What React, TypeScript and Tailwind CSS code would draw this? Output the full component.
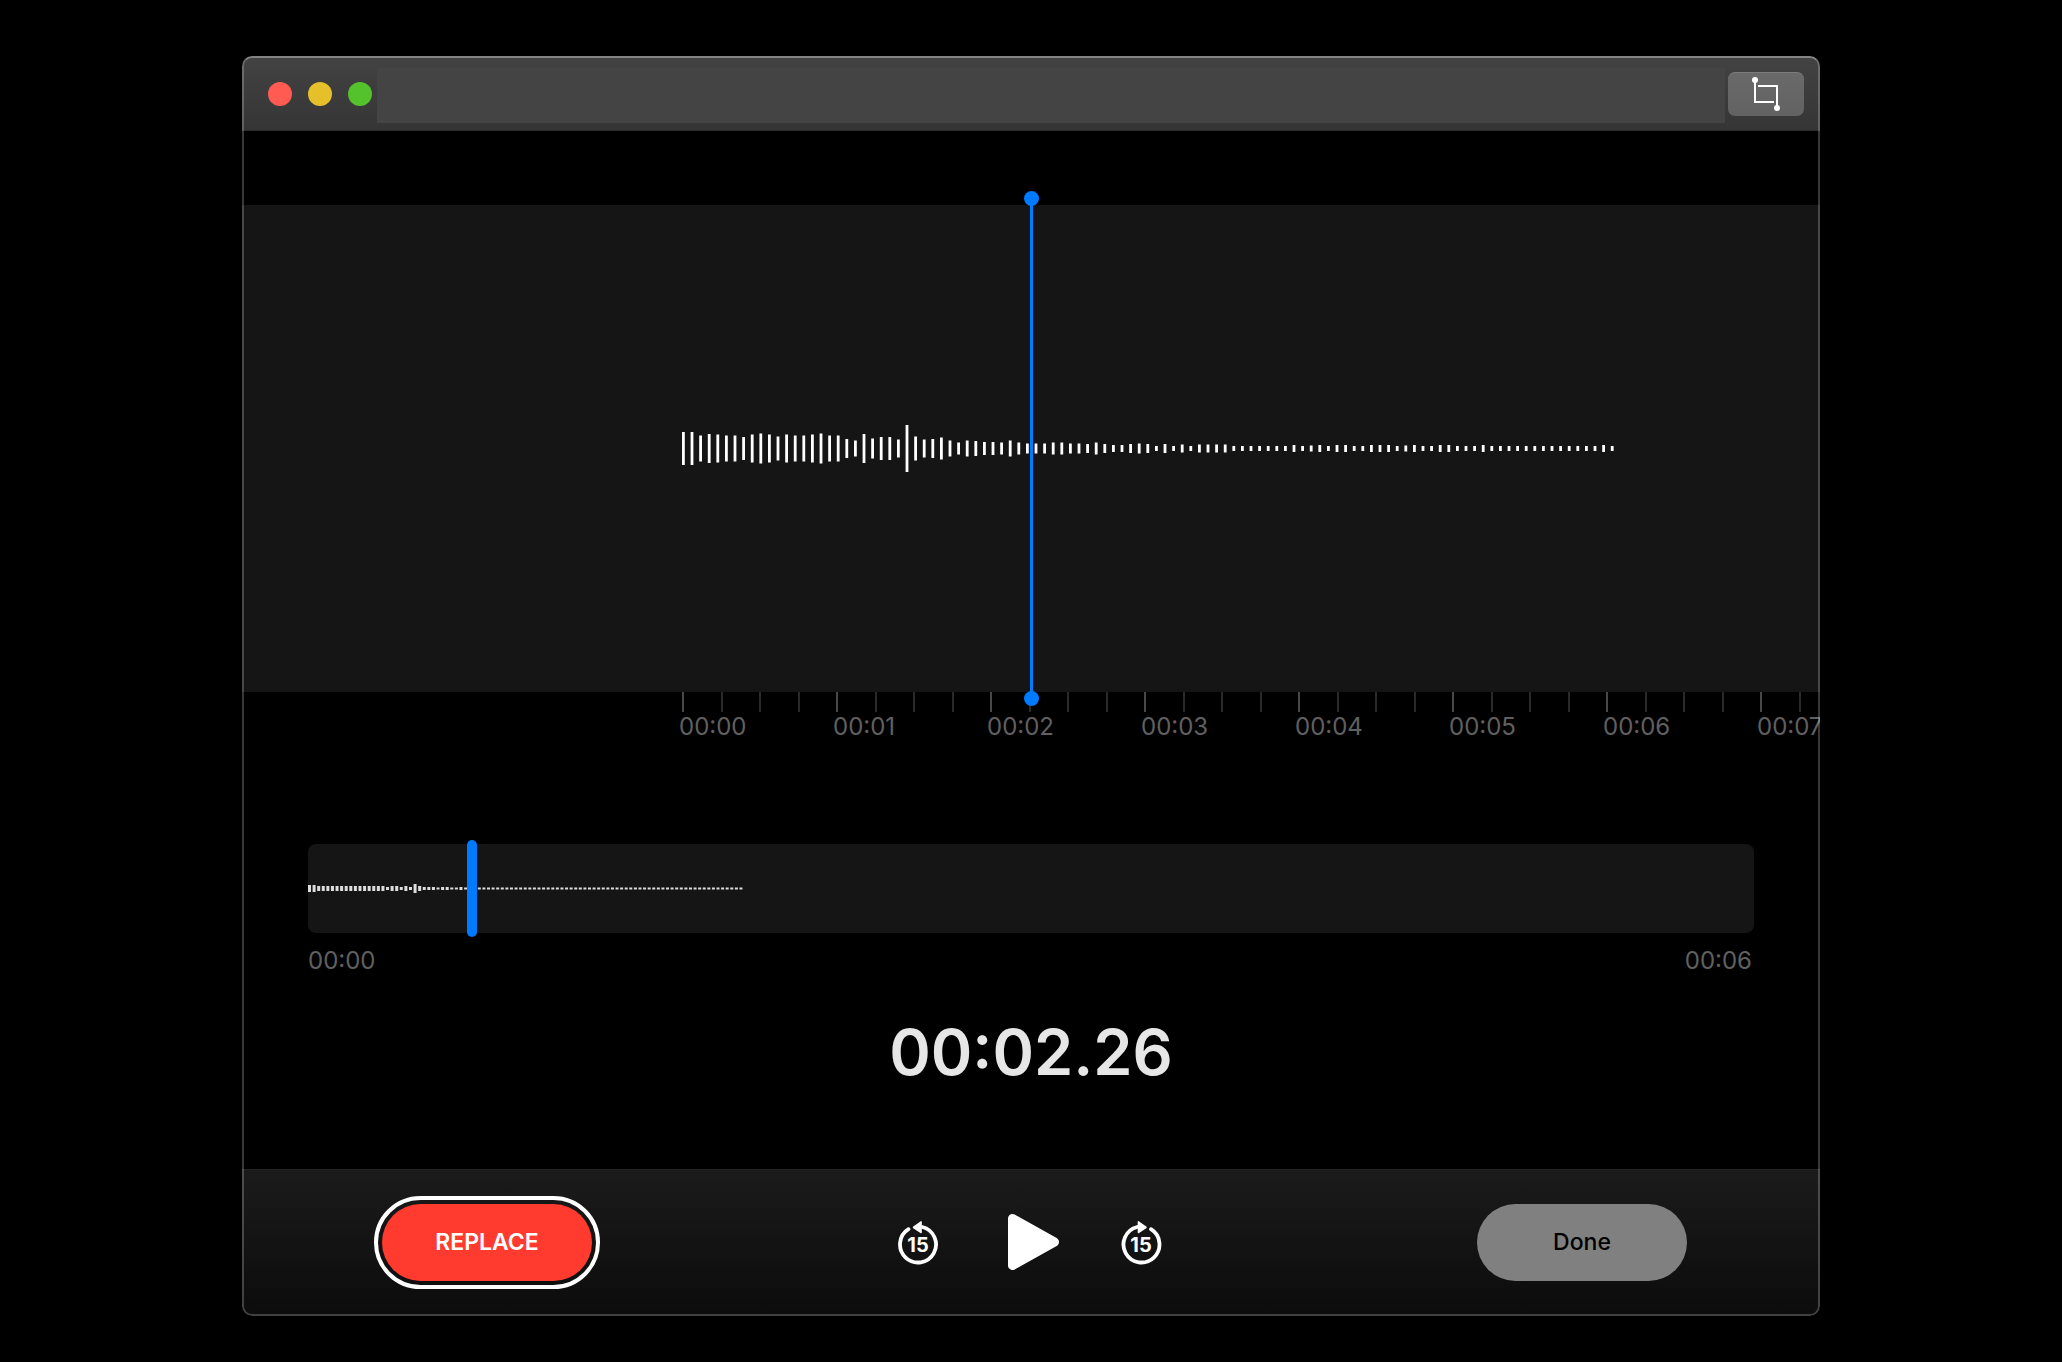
import React, { useState } from "react";

// Ruler scale: 154px per second, time is kept in hundredths of a second
const PX_PER_TICK = 1.54;
const OVERVIEW_MAX = 2041;

const LEVELS = [
    33, 33, 26, 29, 28, 26, 26, 23, 28, 30, 28, 24, 28, 26, 26, 28, 30, 26, 26, 19, 16, 29, 20, 23, 23, 18, 47,
    24, 18, 19, 22, 16, 12, 16, 15, 13, 13, 12, 16, 12, 10, 10, 10, 12, 12, 10, 10, 9, 12, 9, 7, 7, 9,
    10, 9, 5, 9, 5, 8, 5, 8, 8, 8, 8,
    5, 5, 5, 5, 5, 5, 5, 7, 5, 6, 7, 5, 7, 7, 5, 5, 7, 7, 7, 5, 6, 7, 5, 5, 7, 7, 5, 5, 5, 7,
    5, 5, 5, 5, 5, 5, 5, 5, 5, 5, 5, 5, 5, 7, 5,
];

const OVERVIEW_LEVELS = [
    7, 7, 5, 5, 5, 5, 5, 5, 5, 5, 5, 5, 5, 5, 5, 5, 5, 3, 5, 5, 3, 5, 3, 9, 5, 3, 3, 3, 2, 3, 3, 2, 2, 3,
    ...Array<number>(61).fill(2),
];

const SECONDS = ["00:00", "00:01", "00:02", "00:03", "00:04", "00:05", "00:06", "00:07"];

type WaveformProps = {
    levels: number[];
    pitch: number;
    barWidth: number;
    height: number;
    className?: string;
};

function Waveform({ levels, pitch, barWidth, height, className }: WaveformProps) {
    return (
        <svg width={Math.ceil(levels.length * pitch)} height={height} className={className} aria-hidden="true">
            {levels.map((level, i) => (
                <rect key={i} x={i * pitch} y={(height - level) / 2} width={barWidth} height={level} fill="currentColor" />
            ))}
        </svg>
    );
}

function CropIcon() {
    return (
        <svg width="36" height="36" viewBox="0 1 36 36" fill="none" stroke="white" strokeWidth="2" aria-hidden="true">
            <path d="M7 4v22h19M10 10h19v22" />
            <circle cx="7" cy="4" r="3" fill="white" stroke="none" />
            <circle cx="29" cy="32" r="3" fill="white" stroke="none" />
        </svg>
    );
}

function SkipIcon({ forward = false }: { forward?: boolean }) {
    return (
        <svg width="44" height="48" viewBox="0 0 44 48" aria-hidden="true">
            <g transform={forward ? "translate(41.5 0) scale(-1 1)" : undefined}>
                <path
                    d="M10.5 11.2A18 18 0 1 0 24.3 9"
                    fill="none"
                    stroke="white"
                    strokeWidth="3.8"
                    strokeLinecap="round"
                />
                <path d="M15.2 8.6 22.4 3.4Q23.8 2.6 23.8 4V14.2Q23.8 15.6 22.4 15L15.2 10.2Q14.2 9.400 15.2 8.6Z" fill="white" />
            </g>
            <text
                x={forward ? 21 : 20}
                y="34"
                textAnchor="middle"
                fill="white"
                fontSize="20"
                fontWeight="700"
                className="font-['Inter',sans-serif]"
            >
                15
            </text>
        </svg>
    );
}

function PlayIcon() {
    return (
        <svg width="60" height="60" viewBox="0 0 60 60" aria-hidden="true">
            <path
                d="M11.5 6.5 53.5 30 11.5 53.5Z"
                fill="white"
                stroke="white"
                strokeWidth="9"
                strokeLinejoin="round"
            />
        </svg>
    );
}

function TitleBar() {
    return (
        <header className="flex h-[75px] items-center border-b border-[#2b2b2b] bg-linear-to-b from-[#434343] to-[#353535] pt-0.5 pr-4 pl-[26px]">
            <div className="flex gap-4">
                <button aria-label="Close" className="size-6 rounded-full bg-[#ff5b52]" />
                <button aria-label="Minimize" className="size-6 rounded-full bg-[#e6c02a]" />
                <button aria-label="Zoom" className="size-6 rounded-full bg-[#54c22c]" />
            </div>
            <div className="mt-2.5 mr-[3px] mb-[7px] ml-[5px] flex-1 self-stretch bg-[#444444]" />
            <button
                aria-label="Trim"
                className="flex h-11 w-[76px] items-center justify-center rounded-[7px] border-t border-[#7c7c7c] bg-linear-to-b from-[#6a6a6a] to-[#626262]"
            >
                <CropIcon />
            </button>
        </header>
    );
}

function Timeline({ time }: { time: number }) {
    // The recording slides under a playhead that stays in the middle
    const start = { marginLeft: `calc(50% - ${Math.ceil(time * PX_PER_TICK)}px)` };

    return (
        <section className="mt-[74px]">
            <div className="relative">
                <div className="flex h-[487px] items-center overflow-hidden bg-[#151515]">
                    <div style={start}>
                        <Waveform levels={LEVELS} pitch={8.6} barWidth={2.8} height={47} className="text-white" />
                    </div>
                </div>
                <div className="absolute -inset-y-3.5 left-1/2 z-10 -ml-[7px] flex w-[15px] flex-col items-center">
                    <span className="size-[15px] rounded-full bg-[#007aff]" />
                    <span className="-my-1 w-[3px] flex-1 bg-[#007aff]" />
                    <span className="size-[15px] rounded-full bg-[#007aff]" />
                </div>
            </div>

            <div className="overflow-hidden">
                <ol className="flex" style={start}>
                    {SECONDS.map((label) => (
                        <li key={label} className="w-[154px] shrink-0">
                            <div className="grid h-5 grid-cols-4">
                                <span className="border-l-2 border-[#484848]" />
                                <span className="border-l-2 border-[#2a2a2a]" />
                                <span className="border-l-2 border-[#2a2a2a]" />
                                <span className="border-l-2 border-[#2a2a2a]" />
                            </div>
                            <span className="-ml-[3px] block text-2xl leading-[30px] text-[#606060]">{label}</span>
                        </li>
                    ))}
                </ol>
            </div>
        </section>
    );
}

export default function App() {
    const [time, setTime] = useState(226);

    const seconds = String(Math.floor(time / 100)).padStart(2, "0");
    const hundredths = String(time % 100).padStart(2, "0");

    return (
        <div className="min-h-screen bg-black px-8 pt-14 pb-11 font-['Inter',sans-serif]">
            <main className="relative mx-auto max-w-[1578px] overflow-hidden rounded-[10px] bg-black">
                <TitleBar />
                <Timeline time={time} />

                {/* Overview scrubber */}
                <section className="mx-[66px] mt-[102px]">
                    <div className="relative flex h-[89px] items-center rounded-lg bg-[#151515]">
                        <Waveform levels={OVERVIEW_LEVELS} pitch={4.59} barWidth={3} height={9} className="text-[#dddddd]" />
                        <input
                            type="range"
                            aria-label="Playback position"
                            min={0}
                            max={OVERVIEW_MAX}
                            value={time}
                            onChange={(e) => setTime(Number(e.target.value))}
                            className="absolute inset-x-0 -inset-y-1 w-full appearance-none bg-transparent [&::-webkit-slider-thumb]:h-[97px] [&::-webkit-slider-thumb]:w-2.5 [&::-webkit-slider-thumb]:appearance-none [&::-webkit-slider-thumb]:rounded-full [&::-webkit-slider-thumb]:bg-[#007aff]"
                        />
                    </div>
                    <div className="mt-3 flex justify-between pr-0.5 text-2xl text-[#606060]">
                        <span>00:00</span>
                        <span>00:06</span>
                    </div>
                </section>

                <p className="mt-[35px] text-center text-[63px] leading-[80px] font-semibold text-[#e6e6e6]">
                    00:{seconds}.{hundredths}
                </p>

                <footer className="mt-[77px] grid h-[147px] grid-cols-[1fr_auto_1fr] items-center border-t border-[#242424] bg-linear-to-b from-[#1b1b1b] to-[#0c0c0c] pr-[133px] pb-[2px] pl-[140px]">
                    <button className="h-[77px] w-[210px] rounded-full bg-[#ff3b30] text-[23px] font-semibold text-white outline-4 outline-offset-4 outline-white">
                        REPLACE
                    </button>
                    <div className="flex items-center gap-[59px] pr-[7px]">
                        <button aria-label="Skip back 15 seconds" onClick={() => setTime(Math.max(0, time - 1500))}>
                            <SkipIcon />
                        </button>
                        <button aria-label="Play">
                            <PlayIcon />
                        </button>
                        <button aria-label="Skip forward 15 seconds" onClick={() => setTime(Math.min(OVERVIEW_MAX, time + 1500))}>
                            <SkipIcon forward />
                        </button>
                    </div>
                    <button className="h-[77px] w-[210px] justify-self-end rounded-full bg-[#808080] text-[23px] font-medium text-black">
                        Done
                    </button>
                </footer>

                {/* Translucent window edge, drawn over the content */}
                <div className="pointer-events-none absolute inset-0 rounded-[10px] border-2 border-white/22 border-t-white/35" />
            </main>
        </div>
    );
}
